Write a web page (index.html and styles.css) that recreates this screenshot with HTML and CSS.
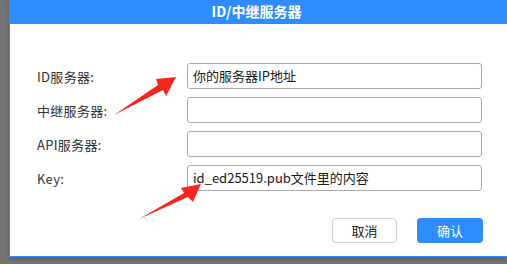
FILE: index.html
```html
<!DOCTYPE html>
<html lang="zh-CN">
<head>
  <meta charset="UTF-8" />
  <title>ID/中继服务器</title>
  <link rel="stylesheet" href="styles.css">
</head>
<body>
  <div class="dialog">
    <header class="dialog-title">ID/中继服务器</header>

    <form class="server-form">
      <div class="row">
        <label>ID服务器:</label>
        <div class="field">你的服务器IP地址</div>
      </div>
      <div class="row">
        <label>中继服务器:</label>
        <div class="field"></div>
      </div>
      <div class="row">
        <label>API服务器:</label>
        <div class="field"></div>
      </div>
      <div class="row">
        <label>Key:</label>
        <div class="field">id_ed25519.pub文件里的内容</div>
      </div>
    </form>

    <div class="actions">
      <button class="btn btn-cancel">取消</button>
      <button class="btn btn-ok">确认</button>
    </div>

    <!-- annotation arrows drawn over the dialog -->
    <svg class="arrows" width="507" height="264" viewBox="0 0 507 264">
      <polygon points="114,115 158,85 156,79 176,77 166,96 163,90" fill="#f5261d" />
      <polygon points="139,219 184,193 181,188 201,184 193,202 188,197" fill="#f5261d" />
    </svg>
  </div>
</body>
</html>
```

FILE: styles.css
```css
:root {
  --blue: #2e8cff;
  --page-bg: #747474;
  --label: #333333;
  --field-border: #ababab;
}

body {
  margin: 0;
  background: var(--page-bg);
  font-family: "Noto Sans CJK SC", "Noto Sans", sans-serif;
  font-size: 13px;
  width: 507px;
  height: 264px;
  overflow: hidden;
}

.dialog {
  position: relative;
  margin-left: 9px;
  width: 497px;
  height: 256px;
  background: #fff;
  border-left: 1px solid var(--blue);
  border-bottom: 1px solid var(--blue);
  box-shadow: 0 3px 4px rgba(0, 0, 0, 0.15);
}

.dialog-title {
  height: 24px;
  line-height: 23px;
  background: var(--blue);
  color: #fff;
  font-weight: bold;
  font-size: 14px;
  text-align: center;
  padding-right: 4px;
}

.server-form {
  padding: 39px 0 0 27px;
  display: flex;
  flex-direction: column;
  gap: 8px;
}

.row {
  display: flex;
  align-items: center;
  height: 26px;
}

.row label {
  width: 150px;
  color: var(--label);
  letter-spacing: 0.3px;
}

.field {
  width: 283px;
  height: 24px;
  line-height: 24px;
  padding: 0 5px;
  border: 1px solid var(--field-border);
  border-radius: 3px;
  color: #1a1a1a;
}

.actions {
  display: flex;
  justify-content: flex-end;
  gap: 20px;
  padding: 27px 24px 0 0;
}

.btn {
  height: 25px;
  border-radius: 4px;
  font-family: inherit;
  font-size: 13px;
  padding: 0;
}

.btn-cancel {
  width: 65px;
  background: #fff;
  border: 1px solid #cfcfcf;
  color: #222;
}

.btn-ok {
  width: 66px;
  background: var(--blue);
  border: none;
  color: #fff;
}

.arrows {
  position: absolute;
  top: 0;
  left: -10px;
  pointer-events: none;
}
```
